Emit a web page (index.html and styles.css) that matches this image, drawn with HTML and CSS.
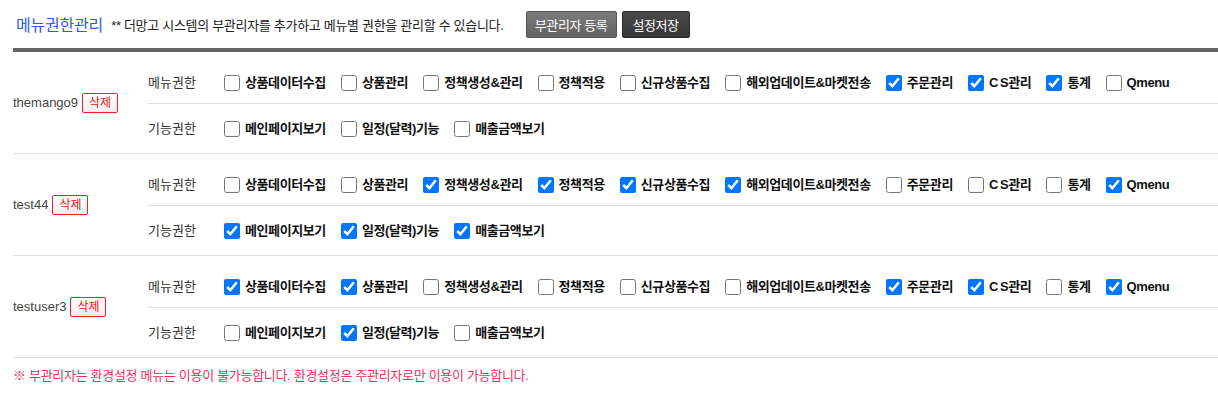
FILE: index.html
```html
<!DOCTYPE html>
<html lang="ko">
<head>
    <meta charset="UTF-8">
    <title>메뉴권한관리</title>
    <link rel="stylesheet" href="styles.css">
</head>
<body>
    <div class="wrap">
        <div class="page-head">
            <h2 class="page-title">메뉴권한관리</h2>
            <span class="page-desc">** 더망고 시스템의 부관리자를 추가하고 메뉴별 권한을 관리할 수 있습니다.</span>
            <div class="head-btns">
                <button class="btn btn-gray">부관리자 등록</button>
                <button class="btn btn-dark">설정저장</button>
            </div>
        </div>
        <div class="head-bar"></div>

        <!-- themango9 -->
        <div class="admin-row">
            <div class="admin-id">themango9 <button class="btn-del">삭제</button></div>
            <div class="perm-list">
                <div class="perm-line first">
                    <span class="perm-label">메뉴권한</span>
                    <div class="perm-items">
                        <label class="chk"><input type="checkbox">상품데이터수집</label>
                        <label class="chk"><input type="checkbox">상품관리</label>
                        <label class="chk"><input type="checkbox">정책생성&amp;관리</label>
                        <label class="chk"><input type="checkbox">정책적용</label>
                        <label class="chk"><input type="checkbox">신규상품수집</label>
                        <label class="chk"><input type="checkbox">해외업데이트&amp;마켓전송</label>
                        <label class="chk"><input type="checkbox" checked>주문관리</label>
                        <label class="chk"><input type="checkbox" checked><span><span class="c">C</span>S관리</span></label>
                        <label class="chk"><input type="checkbox" checked>통계</label>
                        <label class="chk"><input type="checkbox">Qmenu</label>
                    </div>
                </div>
                <div class="perm-line">
                    <span class="perm-label">기능권한</span>
                    <div class="perm-items">
                        <label class="chk"><input type="checkbox">메인페이지보기</label>
                        <label class="chk"><input type="checkbox">일정(달력)기능</label>
                        <label class="chk"><input type="checkbox">매출금액보기</label>
                    </div>
                </div>
            </div>
        </div>

        <!-- test44 -->
        <div class="admin-row">
            <div class="admin-id">test44 <button class="btn-del">삭제</button></div>
            <div class="perm-list">
                <div class="perm-line first">
                    <span class="perm-label">메뉴권한</span>
                    <div class="perm-items">
                        <label class="chk"><input type="checkbox">상품데이터수집</label>
                        <label class="chk"><input type="checkbox">상품관리</label>
                        <label class="chk"><input type="checkbox" checked>정책생성&amp;관리</label>
                        <label class="chk"><input type="checkbox" checked>정책적용</label>
                        <label class="chk"><input type="checkbox" checked>신규상품수집</label>
                        <label class="chk"><input type="checkbox" checked>해외업데이트&amp;마켓전송</label>
                        <label class="chk"><input type="checkbox">주문관리</label>
                        <label class="chk"><input type="checkbox"><span><span class="c">C</span>S관리</span></label>
                        <label class="chk"><input type="checkbox">통계</label>
                        <label class="chk"><input type="checkbox" checked>Qmenu</label>
                    </div>
                </div>
                <div class="perm-line">
                    <span class="perm-label">기능권한</span>
                    <div class="perm-items">
                        <label class="chk"><input type="checkbox" checked>메인페이지보기</label>
                        <label class="chk"><input type="checkbox" checked>일정(달력)기능</label>
                        <label class="chk"><input type="checkbox" checked>매출금액보기</label>
                    </div>
                </div>
            </div>
        </div>

        <!-- testuser3 -->
        <div class="admin-row">
            <div class="admin-id">testuser3 <button class="btn-del">삭제</button></div>
            <div class="perm-list">
                <div class="perm-line first">
                    <span class="perm-label">메뉴권한</span>
                    <div class="perm-items">
                        <label class="chk"><input type="checkbox" checked>상품데이터수집</label>
                        <label class="chk"><input type="checkbox" checked>상품관리</label>
                        <label class="chk"><input type="checkbox">정책생성&amp;관리</label>
                        <label class="chk"><input type="checkbox">정책적용</label>
                        <label class="chk"><input type="checkbox">신규상품수집</label>
                        <label class="chk"><input type="checkbox">해외업데이트&amp;마켓전송</label>
                        <label class="chk"><input type="checkbox" checked>주문관리</label>
                        <label class="chk"><input type="checkbox" checked><span><span class="c">C</span>S관리</span></label>
                        <label class="chk"><input type="checkbox">통계</label>
                        <label class="chk"><input type="checkbox" checked>Qmenu</label>
                    </div>
                </div>
                <div class="perm-line">
                    <span class="perm-label">기능권한</span>
                    <div class="perm-items">
                        <label class="chk"><input type="checkbox">메인페이지보기</label>
                        <label class="chk"><input type="checkbox" checked>일정(달력)기능</label>
                        <label class="chk"><input type="checkbox">매출금액보기</label>
                    </div>
                </div>
            </div>
        </div>

        <p class="notice">※ 부관리자는 환경설정 메뉴는 이용이 불가능합니다. 환경설정은 주관리자로만 이용이 가능합니다.</p>
    </div>
</body>
</html>
```

FILE: styles.css
```css
body {
    margin: 0;
    font-family: "Liberation Sans", "Noto Sans CJK KR", sans-serif;
    font-size: 13px;
    color: #333;
    background: #fff;
}

.wrap {
    padding-left: 13px;
}

/* Header */
.page-head {
    display: flex;
    align-items: center;
    height: 48px;
}

.page-title {
    margin: 0 0 0 3px;
    font-size: 16px;
    font-weight: normal;
    color: #2c5ce0;
    letter-spacing: -0.2px;
}

.page-desc {
    margin-left: 8px;
    font-size: 13px;
    letter-spacing: -0.3px;
    color: #222;
}

.head-btns {
    display: flex;
    gap: 5px;
    margin-left: 22px;
}

.btn {
    height: 27px;
    padding: 0;
    border-radius: 2px;
    color: #fff;
    font-family: inherit;
    font-size: 13px;
    letter-spacing: -0.4px;
    cursor: pointer;
}

.btn-gray {
    width: 91px;
    background: linear-gradient(#7c7c7c, #626262);
    border: 1px solid #555;
}

.btn-dark {
    width: 68px;
    background: linear-gradient(#4a4a4a, #363636);
    border: 1px solid #2c2c2c;
}

.head-bar {
    height: 4px;
    background: #666;
}

/* Admin rows */
.admin-row {
    display: flex;
    border-bottom: 1px solid #ddd;
}

.admin-id {
    width: 135px;
    display: flex;
    align-items: center;
    gap: 4px;
    color: #444;
}

.btn-del {
    width: 36px;
    height: 20px;
    padding: 0;
    border: 1px solid #e22;
    border-radius: 2px;
    background: linear-gradient(#fff, #eee);
    color: #e01a1a;
    font-family: inherit;
    font-size: 12px;
    line-height: 18px;
}

.perm-list {
    flex: 1;
}

.perm-line {
    display: flex;
    align-items: center;
    height: 16px;
    padding: 17px 0 16px;
}

.perm-line.first {
    padding: 23px 0 12px;
    border-bottom: 1px solid #ddd;
}

.perm-label {
    width: 76px;
    color: #333;
    line-height: 16px;
}

.perm-items {
    display: flex;
    gap: 15px;
}

.chk {
    display: flex;
    align-items: center;
    gap: 5px;
    font-weight: bold;
    color: #111;
    letter-spacing: -0.4px;
    line-height: 16px;
    white-space: nowrap;
}

.chk input {
    width: 16px;
    height: 16px;
    margin: 0;
}

.chk .c {
    margin-right: 2px;
}

.notice {
    margin: 0;
    padding: 7px 0;
    color: #e8325e;
    letter-spacing: -0.3px;
}
```
